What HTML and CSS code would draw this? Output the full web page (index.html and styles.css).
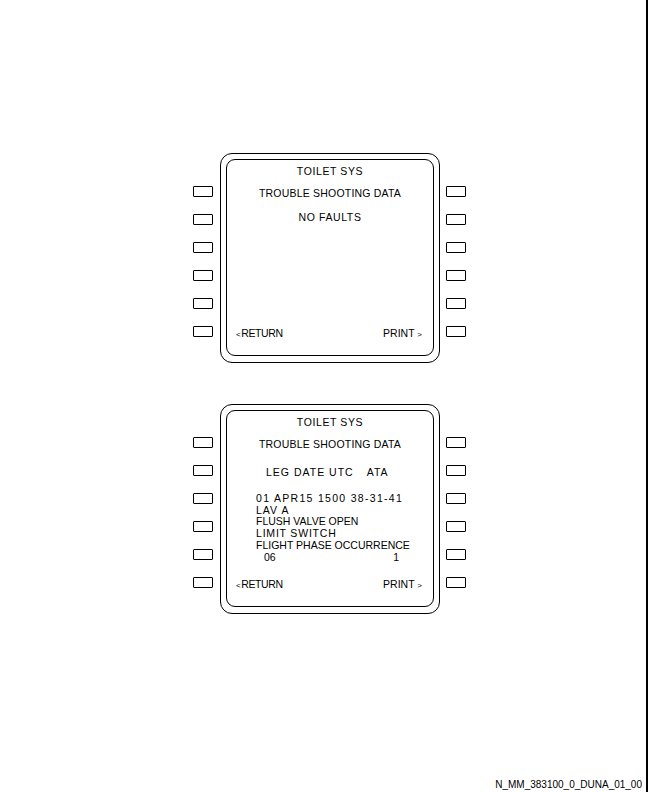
FILE: index.html
```html
<!DOCTYPE html>
<html>
<head>
<meta charset="utf-8">
<link rel="stylesheet" href="styles.css">
</head>
<body>
<div class="page">
  <div class="cdu">
    <div class="keys">
      <span class="key"></span><span class="key"></span><span class="key"></span>
      <span class="key"></span><span class="key"></span><span class="key"></span>
    </div>
    <div class="frame">
      <div class="screen">
        <div class="row title">TOILET SYS</div>
        <div class="row sub">TROUBLE SHOOTING DATA</div>
        <div class="row nofault">NO FAULTS</div>
        <div class="lsk">
          <span class="ret"><span class="arrow">&lt;</span>RETURN</span>
          <span>PRINT <span class="arrow">&gt;</span></span>
        </div>
      </div>
    </div>
    <div class="keys right">
      <span class="key"></span><span class="key"></span><span class="key"></span>
      <span class="key"></span><span class="key"></span><span class="key"></span>
    </div>
  </div>

  <div class="cdu second">
    <div class="keys">
      <span class="key"></span><span class="key"></span><span class="key"></span>
      <span class="key"></span><span class="key"></span><span class="key"></span>
    </div>
    <div class="frame">
      <div class="screen">
        <div class="row title">TOILET SYS</div>
        <div class="row sub">TROUBLE SHOOTING DATA</div>
        <div class="hdr">LEG DATE UTC<span class="ata">ATA</span></div>
        <div class="data">
          <div class="wide">01 APR15 1500 38-31-41</div>
          <div class="lav">LAV A</div>
          <div>FLUSH VALVE OPEN</div>
          <div class="limit">LIMIT SWITCH</div>
          <div>FLIGHT PHASE OCCURRENCE</div>
          <div class="vals"><span>06</span><span>1</span></div>
        </div>
        <div class="lsk">
          <span class="ret"><span class="arrow">&lt;</span>RETURN</span>
          <span>PRINT <span class="arrow">&gt;</span></span>
        </div>
      </div>
    </div>
    <div class="keys right">
      <span class="key"></span><span class="key"></span><span class="key"></span>
      <span class="key"></span><span class="key"></span><span class="key"></span>
    </div>
  </div>

  <div class="docref">N_MM_383100_0_DUNA_01_00</div>
</div>
</body>
</html>
```
FILE: styles.css
```css
* { box-sizing: border-box; }
html, body { margin: 0; padding: 0; background: #fff; }
body {
  font-family: "Liberation Sans", Arial, sans-serif;
  color: #000;
}
.page {
  width: 648px;
  height: 792px;
  border-right: 2px solid #000;
  padding-top: 153px;
  display: flex;
  flex-direction: column;
}
.cdu {
  display: flex;
  align-items: flex-start;
  margin-left: 193px;
}
.cdu.second { margin-top: 41px; }
.keys {
  display: flex;
  flex-direction: column;
  gap: 17px;
  margin-top: 33px;
  width: 20px;
}
.keys.right { margin-left: 6px; }
.key {
  display: block;
  width: 20px;
  height: 11px;
  border: 1px solid #000;
  border-radius: 1px;
}
.frame {
  margin-left: 7px;
  width: 220px;
  height: 210px;
  border: 1px solid #000;
  border-radius: 12px;
  padding: 5px 5px 6px 5px;
}
.screen {
  width: 208px;
  height: 197px;
  border: 1px solid #000;
  border-radius: 9px;
  padding-top: 5px;
  padding-bottom: 14px;
  display: flex;
  flex-direction: column;
  font-size: 10.5px;
  line-height: 12px;
  letter-spacing: 0;
  white-space: nowrap;
}
.row { text-align: center; }
.title { letter-spacing: 0.6px; }
.sub { margin-top: 10px; letter-spacing: 0.2px; }
.nofault { margin-top: 12px; letter-spacing: 0.6px; }
.lsk {
  margin-top: auto;
  display: flex;
  justify-content: space-between;
  padding-left: 9px;
  padding-right: 10px;
}
.lsk .arrow { font-size: 8px; margin-right: 1px; }
.ret { letter-spacing: -0.4px; }
.hdr {
  margin-top: 16px;
  padding-left: 39px;
  letter-spacing: 1px;
}
.ata { margin-left: 13px; }
.data {
  margin-top: 15px;
  padding-left: 29px;
  line-height: 11.7px;
}
.wide { letter-spacing: 1.3px; }
.lav { letter-spacing: 1px; }
.limit { letter-spacing: 0.8px; }
.vals {
  display: flex;
  justify-content: space-between;
  padding-left: 8px;
  padding-right: 34px;
}
.docref {
  margin-top: auto;
  margin-bottom: 1px;
  align-self: flex-end;
  margin-right: 4px;
  font-size: 10px;
  line-height: 12px;
}
```
